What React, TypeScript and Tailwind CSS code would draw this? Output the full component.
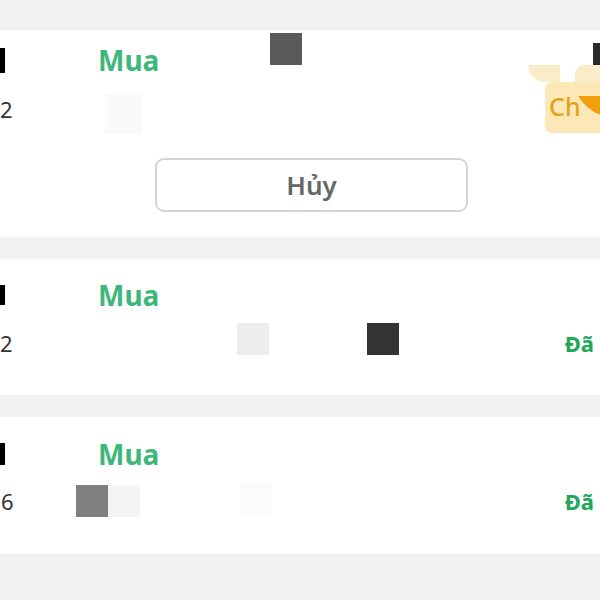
const font = { fontFamily: '"Noto Sans", "Open Sans", sans-serif' };

function Mua() {
  return <span className="ml-[93px] text-[28px] font-bold leading-none text-[#3db87a]">Mua</span>;
}

function Delivered() {
  return <span className="ml-auto pr-[6px] text-[22px] font-bold leading-none text-[#20a759]">Đã</span>;
}

export default function App() {
  return (
    <div className="flex flex-col gap-[22px] w-[600px] h-[600px] overflow-hidden bg-[#f2f2f2] pt-[30px]" style={font}>
      {/* pending order */}
      <div className="relative flex flex-col h-[207px] pt-[10px] bg-white">
        <div className="flex items-center h-[40px]">
          <div className="w-[5px] h-[25px] bg-black" />
          <Mua />
        </div>
        <div className="flex items-center h-[30px] mt-[14px]">
          <span className="w-[105px] text-[22px] leading-none text-[#333]">2</span>
          <div className="w-[37px] h-[40px] mt-[10px] bg-[#fafafa]" />
        </div>
        <div className="flex mt-[34px] pl-[155px]">
          <button className="w-[313px] h-[54px] rounded-[9px] border-2 border-[#d4d4d4] bg-white text-[26px] font-semibold leading-none text-[#666]">
            Hủy
          </button>
        </div>

        {/* redactions and status badge over the header */}
        <div className="absolute left-[270px] top-[3px] w-[32px] h-[32px] bg-[#5a5a5a]" />
        <div className="absolute left-[593px] top-[13px] w-[7px] h-[22px] bg-[#2a2a2a]" />
        <div className="absolute left-[528px] top-[35px] w-[32px] h-[17px] rounded-bl-[30px] bg-[#fbecc9]" />
        <div className="absolute left-[575px] top-[35px] w-[25px] h-[20px] rounded-tl-[10px] bg-[#fbecc9]" />
        <div className="absolute left-[545px] top-[52px] w-[60px] h-[51px] rounded-[7px] bg-[#fce7b7] overflow-hidden">
          <span className="absolute left-[4px] top-[12px] text-[25px] font-medium leading-none text-[#e3a21a]">Ch</span>
          <svg className="absolute left-[33px] top-[14px]" width="27" height="20" viewBox="0 0 27 20">
            <path d="M0 0 H27 V20 C17 18 8 12 0 0 Z" fill="#f0a10b" />
          </svg>
        </div>
      </div>

      {/* delivered order */}
      <div className="flex flex-col h-[136px] pt-[16px] bg-white">
        <div className="flex items-center h-[40px]">
          <div className="w-[5px] h-[20px] bg-black" />
          <Mua />
        </div>
        <div className="flex items-center h-[30px] mt-[13px]">
          <span className="w-[237px] text-[22px] leading-none text-[#333]">2</span>
          <div className="w-[32px] h-[32px] -mt-[8px] bg-[#ededed]" />
          <div className="w-[32px] h-[32px] -mt-[8px] ml-[98px] bg-[#333333]" />
          <Delivered />
        </div>
      </div>

      {/* delivered order */}
      <div className="flex flex-col h-[137px] pt-[17px] bg-white">
        <div className="flex items-center h-[40px]">
          <div className="w-[5px] h-[22px] bg-black" />
          <Mua />
        </div>
        <div className="flex items-center h-[30px] mt-[12px]">
          <span className="w-[76px] pl-[1px] text-[22px] leading-none text-[#333]">6</span>
          <div className="w-[32px] h-[32px] bg-[#808080]" />
          <div className="w-[32px] h-[32px] bg-[#f4f4f4]" />
          <div className="w-[32px] h-[32px] -mt-[6px] ml-[100px] bg-[#fbfbfb]" />
          <Delivered />
        </div>
      </div>
    </div>
  );
}
